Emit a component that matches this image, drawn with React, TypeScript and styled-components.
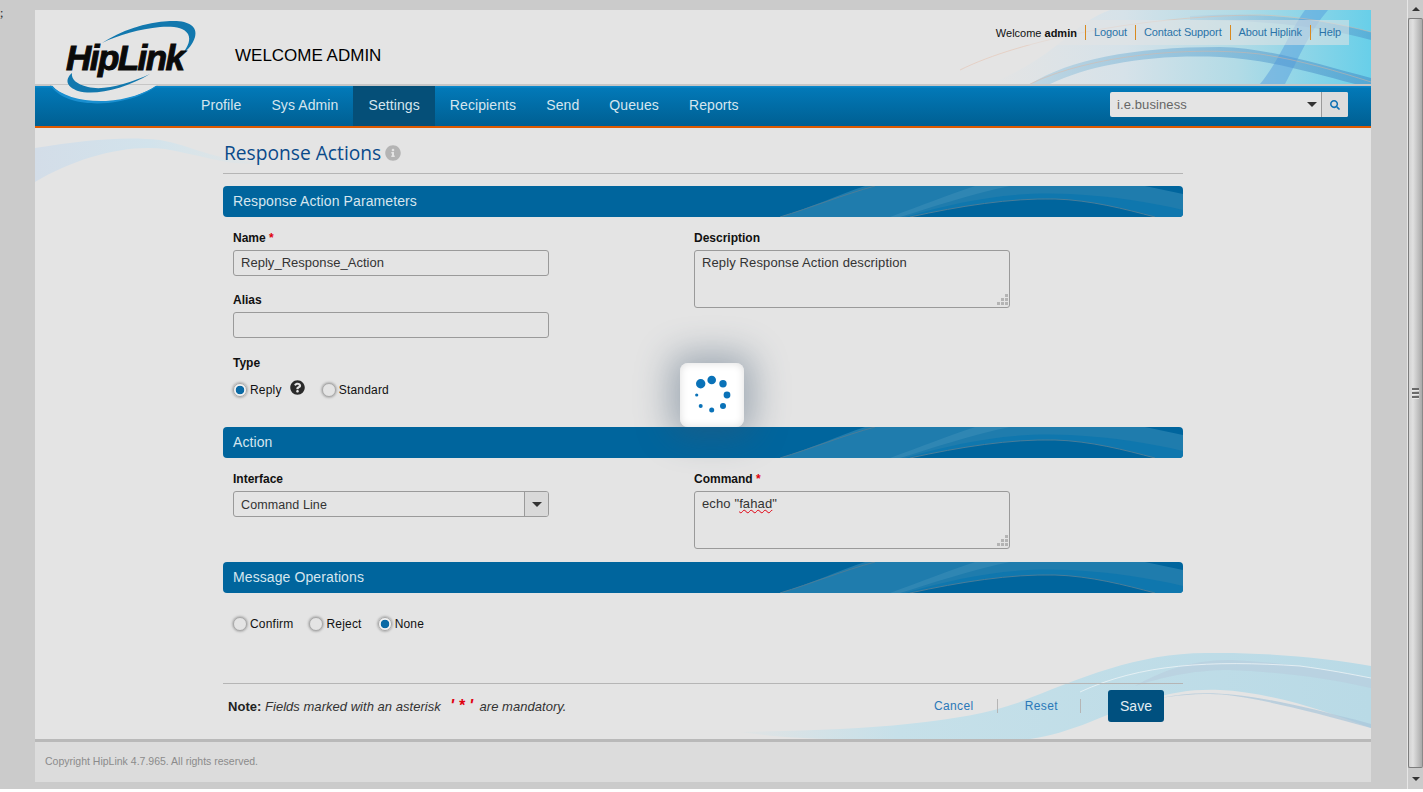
import React from 'react';
import styled, { createGlobalStyle } from 'styled-components';
import { FaInfoCircle, FaQuestionCircle, FaSearch } from 'react-icons/fa';

const GlobalStyle = createGlobalStyle`
  html, body {
    margin: 0;
    padding: 0;
    height: 792px;
    overflow: hidden;
    background: #fff;
    font-family: "Liberation Sans", Arial, sans-serif;
  }
`;

const Page = styled.div`
  display: flex;
  height: 789px;
  background: #cbcbcb;
  overflow: hidden;
`;

const StrayColumn = styled.div`
  width: 35px;
  flex: none;
  font: 12px/14px "Liberation Serif", serif;
  color: #222;
  padding-top: 6px;
  box-sizing: border-box;
`;

const Wrapper = styled.div`
  position: relative;
  flex: none;
  width: 1336px;
  height: 772px;
  margin-top: 10px;
  display: flex;
  flex-direction: column;
  background: #e4e4e4;
`;

const Header = styled.header`
  position: relative;
  flex: none;
  height: 74px;
  display: flex;
  justify-content: space-between;
  align-items: flex-start;
  padding-left: 200px;
  border-bottom: 2px solid #c6c6c6;
  overflow: hidden;
`;

const HeaderWave = styled.svg`
  position: absolute;
  right: 0;
  top: 0;
`;

const Welcome = styled.h1`
  position: relative;
  margin: 36px 0 0;
  font-size: 17px;
  line-height: 20px;
  font-weight: 400;
  color: #000;
`;

const TopLinks = styled.div`
  position: relative;
  display: flex;
  align-items: center;
  height: 25px;
  margin: 10px 22px 0 0;
  padding-left: 8px;
  background: rgba(228, 228, 228, 0.55);
  font-size: 11px;
`;

const WelcomeUser = styled.span`
  padding-right: 8px;
  color: #111;
  b {
    font-weight: 700;
  }
`;

const TopLink = styled.a`
  display: block;
  border-left: 1px solid #d98a1f;
  padding: 0 8px;
  line-height: 15px;
  letter-spacing: -0.12px;
  color: #2a73a8;
`;

const LogoMark = styled.svg`
  position: absolute;
  left: 5px;
  top: 5px;
  z-index: 3;
`;

const Nav = styled.nav`
  flex: none;
  height: 40px;
  display: flex;
  justify-content: space-between;
  padding-left: 151px;
  background: linear-gradient(#0a86c9 0, #0a86c9 1px, #0279b8 2px, #005f92 100%);
  border-bottom: 2px solid #e05a00;
`;

const NavItems = styled.div`
  display: flex;
`;

const NavItem = styled.a<{ $active?: boolean }>`
  display: block;
  padding: 0 15px;
  font-size: 14px;
  line-height: 38px;
  letter-spacing: 0.1px;
  color: #d6e6ef;
  background: ${(p) => (p.$active ? '#054f78' : 'transparent')};
`;

const SearchBox = styled.div`
  display: flex;
  width: 238px;
  height: 25px;
  margin: 6px 23px 0 0;
  border-radius: 2px;
  overflow: hidden;
  background: #e4e4e4;
`;

const SearchSelect = styled.div`
  flex: 1;
  display: flex;
  align-items: center;
  justify-content: space-between;
  padding: 0 4px 0 7px;
  font-size: 13px;
  letter-spacing: 0.1px;
  color: #666;
  border-right: 1px solid #9a9a9a;
`;

const Caret = styled.span`
  width: 0;
  height: 0;
  border-left: 5px solid transparent;
  border-right: 5px solid transparent;
  border-top: 5px solid #333;
`;

const SearchButton = styled.button`
  width: 26px;
  padding: 0;
  border: 0;
  background: #dcdcdc;
  color: #1172b4;
  font-size: 10px;
  display: flex;
  align-items: center;
  justify-content: center;
`;

const Content = styled.main`
  position: relative;
  flex: 1;
  overflow: hidden;
`;

const TopLeftWave = styled.svg`
  position: absolute;
  left: 0;
  top: 8px;
`;

const BottomRightWave = styled.svg`
  position: absolute;
  right: 0;
  bottom: 0;
`;

const Column = styled.div`
  position: relative;
  width: 960px;
  margin: 0 auto;
`;

const TitleRow = styled.div`
  height: 45px;
  display: flex;
  align-items: center;
  gap: 4px;
  padding-left: 1px;
  border-bottom: 1px solid #b5b5b5;
`;

const Title = styled.h2`
  margin: 5px 0 0;
  font: 400 19.2px/24px "Open Sans", sans-serif;
  color: #0a4a8a;
`;

const TitleInfo = styled.span`
  margin-top: 4px;
  color: #b4b4b4;
  font-size: 16px;
  line-height: 16px;
  display: flex;
`;

const BarRoot = styled.div<{ $gap: number }>`
  position: relative;
  height: 31px;
  margin-top: ${(p) => p.$gap}px;
  border-radius: 4px;
  overflow: hidden;
  background: #00659d;
  padding-left: 10px;
  font-size: 14px;
  line-height: 31px;
  letter-spacing: 0.1px;
  color: #d6e6ef;
`;

const BarWave = styled.svg`
  position: absolute;
  right: 0;
  top: 0;
`;

const BarLabel = styled.span`
  position: relative;
`;

const SectionBar = ({ title, gap }: { title: string; gap: number }) => (
  <BarRoot $gap={gap}>
    <BarWave width="413" height="31" viewBox="0 0 413 31">
      <path d="M10 31C40 22 70 8 95 0L375 0L413 8L413 31Z" fill="#1f7cad" />
      <path d="M120 31C150 20 180 8 205 0L240 0C200 8 160 22 130 31Z" fill="#2f86b3" />
      <path d="M135 31C190 15 240 5 300 8C340 10 380 16 413 24L413 31Z" fill="#0f77ae" />
      <path d="M140 31C190 20 240 12 285 13C320 14 355 23 385 31Z" fill="#00659d" />
      <path d="M140 31C190 20 240 12 285 13C320 14 355 23 385 31" fill="none" stroke="#4b7d98" />
      <path d="M10 31C40 22 75 8 105 0" fill="none" stroke="#4b7d98" />
    </BarWave>
    <BarLabel>{title}</BarLabel>
  </BarRoot>
);

const FormGrid = styled.div`
  display: grid;
  grid-template-columns: 461px 316px;
  padding: 14px 0 0 10px;
`;

const Stack = styled.div`
  display: flex;
  flex-direction: column;
`;

const Field = styled.div<{ $gap?: number }>`
  margin-bottom: ${(p) => p.$gap ?? 0}px;
`;

const Label = styled.label`
  display: block;
  font-size: 12px;
  line-height: 14px;
  font-weight: 700;
  color: #111;
  margin-bottom: 5px;
`;

const Star = styled.span`
  color: #e0000f;
  font-weight: 700;
`;

const TextInput = styled.div`
  width: 316px;
  height: 26px;
  box-sizing: border-box;
  padding: 0 7px;
  border: 1px solid #9a9a9a;
  border-radius: 3px;
  font-size: 13px;
  line-height: 24px;
  color: #333;
  letter-spacing: 0.03px;
`;

const SelectInput = styled(TextInput)`
  position: relative;
  overflow: hidden;
  font-size: 12.5px;
  line-height: 26px;
  letter-spacing: 0.1px;
`;

const SelectArrow = styled.span`
  position: absolute;
  right: 0;
  top: 0;
  bottom: 0;
  width: 23px;
  display: flex;
  align-items: center;
  justify-content: center;
  background: #d9d9d9;
  border-left: 1px solid #9a9a9a;
`;

const TextArea = styled.div`
  position: relative;
  width: 316px;
  height: 58px;
  box-sizing: border-box;
  padding: 4px 7px;
  border: 1px solid #9a9a9a;
  border-radius: 3px;
  font-size: 13px;
  line-height: 16px;
  color: #333;
  letter-spacing: 0.12px;
`;

const Misspelt = styled.span`
  text-decoration: underline wavy #e0000f 1px;
`;

const GripIcon = styled.svg`
  position: absolute;
  right: 0;
  bottom: 0;
`;

const Grip = () => (
  <GripIcon width="13" height="13" viewBox="0 0 13 13">
    <g fill="#b4b4b4">
      <rect x="9" y="0" width="3" height="3" />
      <rect x="5" y="4" width="3" height="3" />
      <rect x="9" y="4" width="3" height="3" />
      <rect x="1" y="8" width="3" height="3" />
      <rect x="5" y="8" width="3" height="3" />
      <rect x="9" y="8" width="3" height="3" />
    </g>
  </GripIcon>
);

const RadioRow = styled.div<{ $top: number; $bottom: number }>`
  display: flex;
  align-items: center;
  height: 20px;
  margin: ${(p) => p.$top}px 0 ${(p) => p.$bottom}px;
`;

const RadioOption = styled.label<{ $gap: number }>`
  display: flex;
  align-items: center;
  gap: 3px;
  margin-right: ${(p) => p.$gap}px;
  font-size: 12px;
  letter-spacing: 0.2px;
  color: #111;
`;

const RadioDot = styled.span<{ $checked?: boolean }>`
  width: 12px;
  height: 12px;
  border-radius: 50%;
  border: 1px solid #a8a8a8;
  box-shadow: 0 0 2px 1px rgba(120, 120, 120, 0.45);
  background: ${(p) =>
    p.$checked ? 'radial-gradient(circle, #0a6aa5 0, #0a6aa5 4px, #f2f2f2 4.6px)' : '#e4e4e4'};
`;

const HelpIcon = styled.span`
  display: flex;
  margin: -6px 17px 0 0;
  font-size: 15px;
  color: #2a2a2a;
`;

const Radio = ({ label, checked, gap }: { label: string; checked?: boolean; gap: number }) => (
  <RadioOption $gap={gap}>
    <RadioDot $checked={checked} />
    {label}
  </RadioOption>
);

const FootRow = styled.div`
  margin-top: 50px;
  height: 55px;
  box-sizing: border-box;
  padding: 6px 19px 0 5px;
  border-top: 1px solid #b5b5b5;
  display: flex;
  justify-content: space-between;
  align-items: flex-start;
`;

const Note = styled.p`
  margin: 9px 0 0;
  font-size: 13px;
  line-height: 16px;
  font-style: italic;
  letter-spacing: 0.03px;
  color: #333;
  b {
    font-style: normal;
    color: #222;
  }
`;

const NoteMark = styled.span`
  margin: 0 2px 0 5px;
  font-weight: 700;
  font-size: 16px;
  line-height: 10px;
  color: #e0000f;
  white-space: pre;
`;

const Actions = styled.div`
  display: flex;
  align-items: center;
  height: 32px;
`;

const ActionLink = styled.a<{ $gap: number }>`
  font-size: 12px;
  letter-spacing: 0.4px;
  color: #2a78b8;
  padding-right: ${(p) => p.$gap}px;
  margin-right: 27px;
  border-right: 1px solid #b5b5b5;
  line-height: 14px;
`;

const SaveButton = styled.button`
  width: 56px;
  height: 32px;
  padding: 0;
  border: 0;
  border-radius: 3px;
  background: #00507f;
  color: #e2edf3;
  font: 14px "Liberation Sans", sans-serif;
`;

const Footer = styled.footer`
  flex: none;
  height: 38px;
  display: flex;
  align-items: center;
  padding: 0 0 2px 10px;
  border-top: 3px solid #b9b9b9;
  background: #dcdcdc;
  font-size: 10.5px;
  color: #8b8b8b;
`;

const Spinner = styled.div`
  position: absolute;
  left: 645px;
  top: 353px;
  z-index: 5;
  width: 64px;
  height: 64px;
  border-radius: 8px;
  background: #fff;
  box-shadow: inset 0 0 8px #dedede, 0 0 34px 10px rgba(60, 85, 110, 0.4);
`;

const Gutter = styled.div`
  flex: 1;
`;

const Scrollbar = styled.div`
  flex: none;
  width: 16px;
  display: flex;
  flex-direction: column;
  border-left: 1px solid #e6e6e6;
  box-sizing: border-box;
`;

const ScrollButton = styled.div<{ $height: number }>`
  height: ${(p) => p.$height}px;
  display: flex;
  align-items: center;
  justify-content: center;
`;

const ArrowUp = styled.span`
  border-left: 4px solid transparent;
  border-right: 4px solid transparent;
  border-bottom: 4px solid #333;
`;

const ArrowDown = styled.span`
  border-left: 4px solid transparent;
  border-right: 4px solid transparent;
  border-top: 4px solid #333;
`;

const ScrollThumb = styled.div`
  flex: 1;
  display: flex;
  flex-direction: column;
  align-items: center;
  justify-content: center;
  gap: 1px;
  border: 1px solid #7d7d7d;
  border-right-color: #8a8a8a;
  border-radius: 2px;
  background: linear-gradient(90deg, #d2d2d2, #e0e0e0 30%, #bdbdbd 75%, #a9a9a9);
`;

const GripLine = styled.span`
  width: 7px;
  height: 2px;
  background: #6a6a6a;
  border-bottom: 1px solid #e8e8e8;
`;

export default function App() {
  return (
    <>
      <GlobalStyle />
      <Page>
        <StrayColumn>;</StrayColumn>
        <Wrapper>
          <LogoMark width="160" height="95" viewBox="40 15 160 95">
            <path d="M52 85C60 96 80 103 105 102C125 101 145 94 157 85Z" fill="#e4e4e4" />
            <path d="M50 85C60 100 82 105 108 103C128 101 148 94 158 85C146 93 126 100 106 101C82 102 62 96 50 85Z" fill="#1a8fd0" />
            <path d="M102 43C120 31 145 22 170 21C188 20 198 26 195 37C193 44 188 50 183 53C188 46 191 40 188 34C184 27 172 26 160 27C140 29 118 35 102 43Z" fill="#1278ae" />
            <path d="M72 73C64 80 67 87 78 91C95 96 125 89 150 74C128 84 104 91 88 87C76 84 71 79 72 73Z" fill="#1278ae" />
            <text
              x="66"
              y="70"
              fontFamily="Liberation Sans, sans-serif"
              fontWeight="700"
              fontStyle="italic"
              fontSize="35"
              textLength="119"
              lengthAdjust="spacing"
              fill="#0a0a0a"
              stroke="#0a0a0a"
              strokeWidth="1"
            >
              HipLink
            </text>
          </LogoMark>
          <Header>
            <HeaderWave width="411" height="74" viewBox="0 0 411 74">
              <defs>
                <linearGradient id="headFill" x1="0" y1="0" x2="1" y2="0">
                  <stop offset="0" stopColor="#e4e4e4" />
                  <stop offset="0.35" stopColor="#d6e2e9" />
                  <stop offset="0.65" stopColor="#b2dbe6" />
                  <stop offset="1" stopColor="#68cfe9" />
                </linearGradient>
                <linearGradient id="headBand" x1="0" y1="0" x2="1" y2="0">
                  <stop offset="0" stopColor="#b7d3e2" />
                  <stop offset="1" stopColor="#4f9fd0" />
                </linearGradient>
              </defs>
              <path d="M30 74C100 45 110 15 150 0L411 0L411 74Z" fill="url(#headFill)" />
              <path d="M70 74C110 50 170 37 260 37C310 38 360 55 411 68L411 74L395 74C350 62 310 50 260 47C190 44 130 55 90 74Z" fill="url(#headBand)" opacity="0.8" />
              <path d="M230 6C300 2 360 8 411 22L411 30C360 16 300 10 230 10Z" fill="url(#headBand)" opacity="0.65" />
              <path d="M345 0C330 20 320 50 300 74L325 74C338 50 350 20 368 0Z" fill="#4f96dc" opacity="0.45" />
              <path d="M0 60C60 30 180 6 300 5C340 6 380 14 411 22" fill="none" stroke="#e7b9a0" strokeOpacity="0.45" />
              <path d="M70 74C130 45 230 36 300 44C340 50 380 62 411 72" fill="none" stroke="#e2b49c" strokeOpacity="0.45" />
            </HeaderWave>
            <Welcome>WELCOME ADMIN</Welcome>
            <TopLinks>
              <WelcomeUser>
                Welcome <b>admin</b>
              </WelcomeUser>
              <TopLink>Logout</TopLink>
              <TopLink>Contact Support</TopLink>
              <TopLink>About Hiplink</TopLink>
              <TopLink>Help</TopLink>
            </TopLinks>
          </Header>
          <Nav>
            <NavItems>
              <NavItem>Profile</NavItem>
              <NavItem>Sys Admin</NavItem>
              <NavItem $active>Settings</NavItem>
              <NavItem>Recipients</NavItem>
              <NavItem>Send</NavItem>
              <NavItem>Queues</NavItem>
              <NavItem>Reports</NavItem>
            </NavItems>
            <SearchBox>
              <SearchSelect>
                i.e.business
                <Caret />
              </SearchSelect>
              <SearchButton>
                <FaSearch />
              </SearchButton>
            </SearchBox>
          </Nav>
          <Content>
            <TopLeftWave width="240" height="48" viewBox="0 0 240 48">
              <defs>
                <linearGradient id="leftFill" x1="0" y1="0" x2="1" y2="0">
                  <stop offset="0" stopColor="#d3dde8" />
                  <stop offset="0.5" stopColor="#d2e3ec" />
                  <stop offset="1" stopColor="#d8e6ea" stopOpacity="0.2" />
                </linearGradient>
              </defs>
              <path d="M0 12C50 4 90 0 125 4C160 10 180 26 230 26C200 32 170 20 130 13C90 8 40 22 0 46Z" fill="url(#leftFill)" />
            </TopLeftWave>
            <BottomRightWave width="631" height="87" viewBox="0 0 631 87">
              <defs>
                <linearGradient id="footFill" x1="0" y1="0" x2="1" y2="0">
                  <stop offset="0" stopColor="#c6e0e9" stopOpacity="0.1" />
                  <stop offset="0.25" stopColor="#c6e0e9" />
                  <stop offset="1" stopColor="#b9dae6" />
                </linearGradient>
              </defs>
              <path d="M0 80C120 78 220 72 280 50C340 26 400 0 470 1C520 0 590 6 631 14L631 76C590 60 530 40 480 38C430 36 400 50 350 70C330 78 310 84 290 87L100 87C60 87 30 84 0 80Z" fill="url(#footFill)" />
              <path d="M490 8C540 10 590 18 631 26L631 36C590 26 540 20 490 18C450 18 420 26 395 34C420 20 450 8 490 8Z" fill="#b8c9dc" opacity="0.5" />
              <path d="M420 46C470 36 510 40 631 72L631 76C560 56 500 42 470 42C450 42 435 44 420 46Z" fill="#aac6da" opacity="0.7" />
              <path d="M340 40C400 12 470 8 560 14C590 18 610 22 631 26" fill="none" stroke="#eef4f6" strokeOpacity="0.8" />
            </BottomRightWave>
            <Column>
              <TitleRow>
                <Title>Response Actions</Title>
                <TitleInfo>
                  <FaInfoCircle />
                </TitleInfo>
              </TitleRow>
              <SectionBar title="Response Action Parameters" gap={12} />
              <FormGrid>
                <Stack>
                  <Field $gap={17}>
                    <Label>
                      Name <Star>*</Star>
                    </Label>
                    <TextInput>Reply_Response_Action</TextInput>
                  </Field>
                  <Field $gap={18}>
                    <Label>Alias</Label>
                    <TextInput />
                  </Field>
                  <Label>Type</Label>
                  <RadioRow $top={5} $bottom={27}>
                    <Radio label="Reply" checked gap={8} />
                    <HelpIcon>
                      <FaQuestionCircle />
                    </HelpIcon>
                    <Radio label="Standard" gap={0} />
                  </RadioRow>
                </Stack>
                <Field>
                  <Label>Description</Label>
                  <TextArea>
                    Reply Response Action description
                    <Grip />
                  </TextArea>
                </Field>
              </FormGrid>
              <SectionBar title="Action" gap={0} />
              <FormGrid>
                <Field>
                  <Label>Interface</Label>
                  <SelectInput>
                    Command Line
                    <SelectArrow>
                      <Caret />
                    </SelectArrow>
                  </SelectInput>
                </Field>
                <Field>
                  <Label>
                    Command <Star>*</Star>
                  </Label>
                  <TextArea>
                    echo "<Misspelt>fahad</Misspelt>"
                    <Grip />
                  </TextArea>
                </Field>
              </FormGrid>
              <SectionBar title="Message Operations" gap={13} />
              <FormGrid>
                <RadioRow $top={7} $bottom={-1}>
                  <Radio label="Confirm" gap={16} />
                  <Radio label="Reject" gap={16} />
                  <Radio label="None" checked gap={0} />
                </RadioRow>
              </FormGrid>
              <FootRow>
                <Note>
                  <b>Note:</b> Fields marked with an asterisk
                  <NoteMark> ' * ' </NoteMark>
                  are mandatory.
                </Note>
                <Actions>
                  <ActionLink $gap={23}>Cancel</ActionLink>
                  <ActionLink $gap={22}>Reset</ActionLink>
                  <SaveButton>Save</SaveButton>
                </Actions>
              </FootRow>
            </Column>
          </Content>
          <Footer>Copyright HipLink 4.7.965. All rights reserved.</Footer>
          <Spinner>
            <svg width="64" height="64" viewBox="0 0 64 64">
              <g fill="#0a72b8">
                <circle cx="20.7" cy="20.7" r="4.7" />
                <circle cx="31.7" cy="17" r="4.3" />
                <circle cx="43" cy="20.7" r="3.7" />
                <circle cx="47" cy="32" r="3.4" />
                <circle cx="43" cy="43" r="3" />
                <circle cx="31.7" cy="47" r="2.5" />
                <circle cx="20.7" cy="43" r="2" />
                <circle cx="16.7" cy="32" r="1.6" />
              </g>
            </svg>
          </Spinner>
        </Wrapper>
        <Gutter />
        <Scrollbar>
          <ScrollButton $height={18}>
            <ArrowUp />
          </ScrollButton>
          <ScrollThumb>
            <GripLine />
            <GripLine />
            <GripLine />
          </ScrollThumb>
          <ScrollButton $height={21}>
            <ArrowDown />
          </ScrollButton>
        </Scrollbar>
      </Page>
    </>
  );
}
